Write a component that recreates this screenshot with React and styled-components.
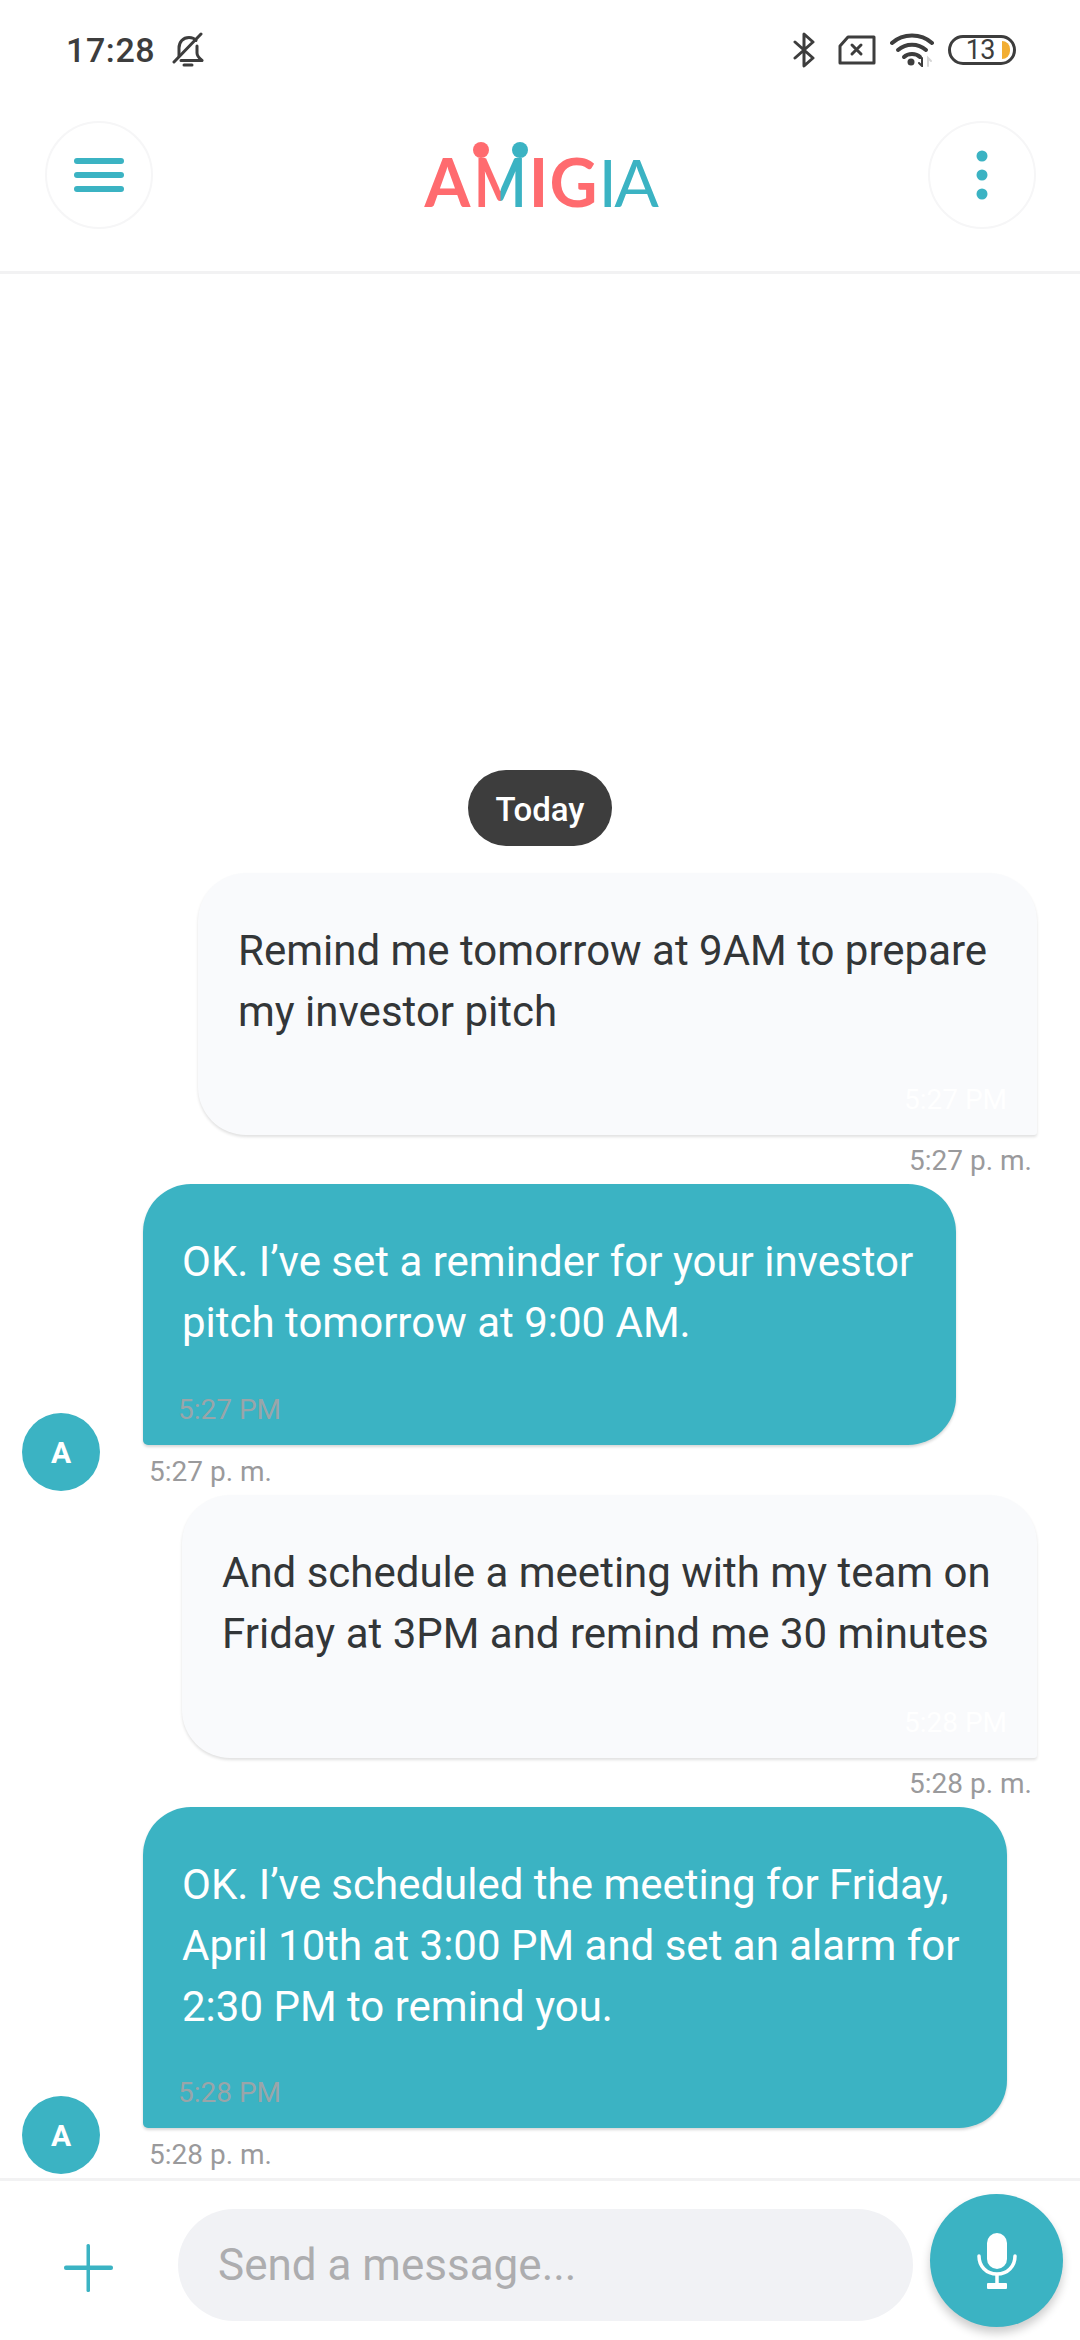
import React from "react";
import styled, { createGlobalStyle } from "styled-components";

const teal = "#3bb3c3";
const coral = "#ff6b6f";

const GlobalStyle = createGlobalStyle`
  html, body { margin: 0; padding: 0; background: #fff; }
  * { box-sizing: border-box; }
  body { font-family: Roboto, "Liberation Sans", sans-serif; }
`;

const Screen = styled.div`
  width: 1080px;
  height: 2340px;
  display: flex;
  flex-direction: column;
  overflow: hidden;
  background: #fff;
`;

const StatusBar = styled.div`
  height: 100px;
  flex: none;
  display: flex;
  align-items: center;
  padding: 0 64px 0 66px;
  color: #3d3d3d;
`;

const Clock = styled.span`
  font-size: 34px;
  font-weight: 500;
  letter-spacing: 0.6px;
  margin-right: 17px;
`;

const StatusIcons = styled.div`
  margin-left: auto;
  display: flex;
  align-items: center;
  gap: 14px;
`;

const Battery = styled.div`
  width: 68px;
  height: 30px;
  border: 3px solid #3d3d3d;
  border-radius: 15px;
  display: flex;
  align-items: center;
  justify-content: flex-end;
  gap: 7px;
  padding-right: 3px;
  font-size: 27px;
  letter-spacing: -0.5px;
  line-height: 1;
  color: #3d3d3d;
`;

const BatteryLevel = styled.span`
  width: 8px;
  height: 18px;
  background: #f2ae33;
  border-radius: 0 9px 9px 0;
`;

const BluetoothSvg = styled.svg`
  margin-right: 9px;
`;

const Header = styled.header`
  height: 174px;
  flex: none;
  display: flex;
  align-items: flex-start;
  justify-content: space-between;
  padding: 21px 44px 0 45px;
  border-bottom: 3px solid #f2f2f3;
`;

const RoundButton = styled.div`
  width: 108px;
  height: 108px;
  border-radius: 50%;
  border: 2px solid #f6f6f7;
  display: flex;
  align-items: center;
  justify-content: center;
`;

const Logo = styled.div`
  position: relative;
  margin-top: 16px;
  height: 80px;
  width: 240px;
  padding-left: 2px;
  display: flex;
  align-items: flex-end;
  font-family: Lato, sans-serif;
  font-size: 66px;
  line-height: 70px;
`;

const LogoLetter = styled.span`
  width: ${(p) => p.box}px;
  flex: none;
  text-align: center;
  color: ${(p) => p.color};
  font-weight: ${(p) => p.weight || 700};
`;

const LogoSplitBox = styled.span`
  width: ${(p) => p.box}px;
  flex: none;
  display: flex;
  justify-content: center;
`;

const LogoSplitLetter = styled.span`
  display: inline-block;
  font-weight: 700;
  transform: scaleX(0.84);
  color: transparent;
  background: linear-gradient(90deg, ${coral} 0 50%, ${teal} 50% 100%);
  -webkit-background-clip: text;
  background-clip: text;
`;

const LogoDot = styled.span`
  position: absolute;
  top: 5px;
  left: ${(p) => p.left}px;
  width: 16px;
  height: 16px;
  border-radius: 50%;
  background: ${(p) => p.color};
`;

const Chat = styled.main`
  flex: 1;
  min-height: 0;
  display: flex;
  flex-direction: column;
  justify-content: flex-end;
`;

const DayPill = styled.div`
  align-self: center;
  width: 144px;
  height: 76px;
  margin-bottom: 27px;
  padding-top: 3px;
  border-radius: 38px;
  background: #3d3d3d;
  color: #fff;
  font-size: 33px;
  font-weight: 500;
  display: flex;
  align-items: center;
  justify-content: center;
`;

const OutgoingRow = styled.div`
  display: flex;
  flex-direction: column;
  align-items: flex-end;
  padding-right: 43px;
`;

const IncomingRow = styled.div`
  display: flex;
  align-items: flex-end;
  padding-left: 22px;
  padding-bottom: 4px;
  gap: 43px;
`;

const IncomingBody = styled.div`
  display: flex;
  flex-direction: column;
  align-items: flex-start;
`;

const Avatar = styled.div`
  width: 78px;
  height: 78px;
  flex: none;
  border-radius: 50%;
  background: ${teal};
  color: #fff;
  font-size: 30px;
  font-weight: 700;
  display: flex;
  align-items: center;
  justify-content: center;
`;

const Bubble = styled.div`
  width: ${(p) => p.width}px;
  height: ${(p) => p.height}px;
  padding: 47px 0 0 ${(p) => (p.incoming ? 39 : 40)}px;
  display: flex;
  flex-direction: column;
  background: ${(p) => (p.incoming ? teal : "#f9fafc")};
  color: ${(p) => (p.incoming ? "#fff" : "#333638")};
  border-radius: ${(p) => (p.incoming ? "48px 48px 48px 5px" : "48px 48px 3px 48px")};
  box-shadow: 0 2px 3px rgba(0, 0, 0, ${(p) => (p.incoming ? 0.16 : 0.12)});
  font-size: 42px;
  line-height: 61px;
`;

const BubbleTime = styled.span`
  margin-top: auto;
  margin-bottom: 19px;
  font-size: 28px;
  line-height: 32px;
  color: ${(p) => (p.incoming ? "#9aa5a9" : "#fff")};
  align-self: ${(p) => (p.incoming ? "flex-start" : "flex-end")};
  margin-left: ${(p) => (p.incoming ? -4 : 0)}px;
  margin-right: ${(p) => (p.incoming ? 0 : 30)}px;
`;

const MessageTime = styled.div`
  height: ${(p) => (p.incoming ? 46 : 49)}px;
  padding: ${(p) => (p.incoming ? "11px 0 0 6px" : "10px 5px 0 0")};
  font-size: 28px;
  line-height: 32px;
  color: #9a9a9c;
`;

const Footer = styled.footer`
  height: 162px;
  flex: none;
  display: flex;
  align-items: flex-start;
  padding: 13px 18px 0 0;
  border-top: 3px solid #f2f2f3;
`;

const AddButton = styled.div`
  width: 178px;
  height: 150px;
  flex: none;
  padding: 50px 0 0 64px;
`;

const MessageInput = styled.div`
  width: 735px;
  height: 112px;
  margin-top: 15px;
  flex: none;
  border-radius: 56px;
  background: #f1f2f5;
  color: #adadaf;
  font-size: 44px;
  padding-left: 40px;
  display: flex;
  align-items: center;
`;

const MicButton = styled.div`
  width: 133px;
  height: 133px;
  flex: none;
  margin-left: 17px;
  border-radius: 50%;
  background: ${teal};
  box-shadow: 0 6px 10px rgba(0, 0, 0, 0.2);
  display: flex;
  align-items: center;
  justify-content: center;
`;

const BellOff = () => (
  <svg width="32" height="36" viewBox="0 0 32 36" fill="none" stroke="#3d3d3d" strokeWidth="3" strokeLinecap="round" strokeLinejoin="round">
    <path d="M7 24V16C7 10 11 5.500 17 5.500C20 5.500 22.500 6.500 24 8.500" />
    <path d="M25 14V21C25 24 27 26 30 28.500H9" />
    <path d="M2 30L29 2" />
    <path d="M12 33H20" />
  </svg>
);

const Bluetooth = () => (
  <BluetoothSvg width="22" height="36" viewBox="0 0 22 36" fill="none" stroke="#3d3d3d" strokeWidth="3" strokeLinecap="round" strokeLinejoin="round">
    <path d="M2 10L20 26L11 34V2L20 10L2 26" />
  </BluetoothSvg>
);

const SimOff = () => (
  <svg width="38" height="30" viewBox="0 0 38 30" fill="none" stroke="#3d3d3d" strokeWidth="3" strokeLinecap="round" strokeLinejoin="round">
    <path d="M10 2H36V28H2V11Z" />
    <path d="M14 10L23 19M23 10L14 19" />
  </svg>
);

const Wifi = () => (
  <svg width="44" height="34" viewBox="0 0 44 34" fill="none" strokeLinecap="round">
    <g stroke="#3d3d3d" strokeWidth="4">
      <path d="M2 10C13 0 31 0 42 10" />
      <path d="M8 17C16 10 28 10 36 17" />
      <path d="M14 24C18 20 26 20 30 24" />
    </g>
    <circle cx="21" cy="29" r="3.500" fill="#3d3d3d" />
    <path d="M32 25V33L29 30" stroke="#3d3d3d" strokeWidth="2" fill="none" />
    <path d="M38 33V25L41 28" stroke="#d6d6d6" strokeWidth="2" fill="none" />
  </svg>
);

const MenuIcon = () => (
  <svg width="50" height="34" viewBox="0 0 50 34" fill={teal}>
    <rect y="0" width="50" height="6" rx="3" />
    <rect y="14" width="50" height="6" rx="3" />
    <rect y="28" width="50" height="6" rx="3" />
  </svg>
);

const KebabIcon = () => (
  <svg width="12" height="50" viewBox="0 0 12 50" fill={teal}>
    <circle cx="6" cy="6" r="5.500" />
    <circle cx="6" cy="25" r="5.500" />
    <circle cx="6" cy="44" r="5.500" />
  </svg>
);

const PlusIcon = () => (
  <svg width="49" height="48" viewBox="0 0 49 48" fill={teal}>
    <rect x="22.500" width="3.500" height="48" rx="1.500" />
    <rect y="21.500" width="49" height="4.500" rx="2" />
  </svg>
);

const MicIcon = () => (
  <svg width="40" height="56" viewBox="0 0 40 56" fill="none">
    <rect x="10" y="0" width="20" height="36" rx="10" fill="#fff" />
    <path d="M2 23C2 33 9 41 20 41C31 41 38 33 38 23" stroke="#fff" strokeWidth="3.500" strokeLinecap="round" />
    <path d="M20 41V52" stroke="#fff" strokeWidth="3.500" />
    <rect x="10" y="50" width="20" height="6" rx="1" fill="#fff" />
  </svg>
);

const messages = [
  { id: 1, text: "Remind me tomorrow at 9AM to prepare my investor pitch", width: 839, height: 262, inner: "5:27 PM", time: "5:27 p. m." },
  { id: 2, incoming: true, text: "OK. I’ve set a reminder for your investor pitch tomorrow at 9:00 AM.", width: 813, height: 261, inner: "5:27 PM", time: "5:27 p. m." },
  { id: 3, text: "And schedule a meeting with my team on Friday at 3PM and remind me 30 minutes", width: 855, height: 263, inner: "5:28 PM", time: "5:28 p. m." },
  { id: 4, incoming: true, text: "OK. I’ve scheduled the meeting for Friday, April 10th at 3:00 PM and set an alarm for 2:30 PM to remind you.", width: 864, height: 321, inner: "5:28 PM", time: "5:28 p. m." },
];

const Message = ({ message }) => {
  const bubble = (
    <Bubble incoming={message.incoming} width={message.width} height={message.height}>
      <span>{message.text}</span>
      <BubbleTime incoming={message.incoming}>{message.inner}</BubbleTime>
    </Bubble>
  );
  if (message.incoming) {
    return (
      <IncomingRow>
        <Avatar>A</Avatar>
        <IncomingBody>
          {bubble}
          <MessageTime incoming>{message.time}</MessageTime>
        </IncomingBody>
      </IncomingRow>
    );
  }
  return (
    <OutgoingRow>
      {bubble}
      <MessageTime>{message.time}</MessageTime>
    </OutgoingRow>
  );
};

export default function App() {
  return (
    <Screen>
      <GlobalStyle />
      <StatusBar>
        <Clock>17:28</Clock>
        <BellOff />
        <StatusIcons>
          <Bluetooth />
          <SimOff />
          <Wifi />
          <Battery>
            13
            <BatteryLevel />
          </Battery>
        </StatusIcons>
      </StatusBar>
      <Header>
        <RoundButton>
          <MenuIcon />
        </RoundButton>
        <Logo>
          <LogoDot left={52} color={coral} />
          <LogoDot left={91} color={teal} />
          <LogoLetter box={50} color={coral}>A</LogoLetter>
          <LogoSplitBox box={56}>
            <LogoSplitLetter>M</LogoSplitLetter>
          </LogoSplitBox>
          <LogoLetter box={20} color={coral}>I</LogoLetter>
          <LogoLetter box={50} color={coral}>G</LogoLetter>
          <LogoLetter box={12} color={teal} weight={400}>I</LogoLetter>
          <LogoLetter box={52} color={teal} weight={400}>A</LogoLetter>
        </Logo>
        <RoundButton>
          <KebabIcon />
        </RoundButton>
      </Header>
      <Chat>
        <DayPill>Today</DayPill>
        {messages.map((message) => (
          <Message key={message.id} message={message} />
        ))}
      </Chat>
      <Footer>
        <AddButton>
          <PlusIcon />
        </AddButton>
        <MessageInput>Send a message...</MessageInput>
        <MicButton>
          <MicIcon />
        </MicButton>
      </Footer>
    </Screen>
  );
}
